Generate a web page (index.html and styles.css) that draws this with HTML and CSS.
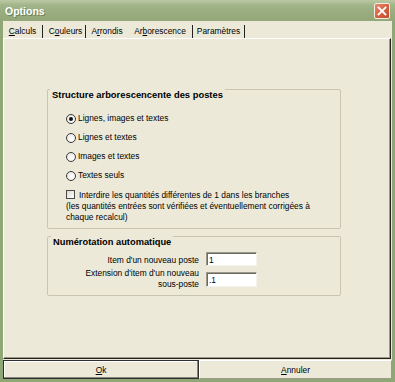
FILE: index.html
```html
<!DOCTYPE html>
<html lang="fr">
<head>
  <meta charset="UTF-8" />
  <title>Options</title>
  <link rel="stylesheet" href="styles.css">
</head>
<body>

  <div class="window">
    <!-- Title bar -->
    <div class="titlebar">
      <span class="title">Options</span>
      <button class="close-btn">
        <svg width="10" height="10" viewBox="0 0 10 10">
          <path d="M1.5 1.5 L8.5 8.5 M8.5 1.5 L1.5 8.5" stroke="#fff" stroke-width="1.8" stroke-linecap="square" />
        </svg>
      </button>
    </div>

    <div class="client">
      <!-- Tabs -->
      <div class="tabs">
        <div class="tab t1"><u>C</u>alculs</div>
        <div class="tab t2">C<u>o</u>uleurs</div>
        <div class="tab t3 no-sep">A<u>r</u>rondis</div>
        <div class="tab t4 active">Ar<u>b</u>orescence</div>
        <div class="tab t5">Paramètres</div>
      </div>

      <!-- Tab page -->
      <div class="panel">
        <div class="group structure">
          <div class="group-title">Structure arborescencente des postes</div>
          <div class="options">
            <div class="radio-row"><span class="radio checked"></span>Lignes, images et textes</div>
            <div class="radio-row"><span class="radio"></span>Lignes et textes</div>
            <div class="radio-row"><span class="radio"></span>Images et textes</div>
            <div class="radio-row"><span class="radio"></span>Textes seuls</div>
          </div>
          <div class="check-block">
            <span class="checkbox"></span>Interdire les quantités différentes de 1 dans les branches<br>
            (les quantités entrées sont vérifiées et éventuellement corrigées à<br>
            chaque recalcul)
          </div>
        </div>

        <div class="group numbering">
          <div class="group-title">Numérotation automatique</div>
          <div class="num-grid">
            <div class="lbl first">Item d'un nouveau poste</div>
            <div class="field short">1</div>
            <div class="lbl">Extension d'item d'un nouveau<br>sous-poste</div>
            <div class="field">.1</div>
          </div>
        </div>
      </div>

      <!-- Dialog buttons -->
      <div class="buttons">
        <button class="btn default"><u>O</u>k</button>
        <button class="btn"><u>A</u>nnuler</button>
      </div>
    </div>
  </div>

</body>
</html>
```

FILE: styles.css
```css
body {
  margin: 0;
  font-family: "Liberation Sans", Tahoma, Arial, sans-serif;
  font-size: 8.4px;
  color: #000;
  background: #ece9d8;
}

.window {
  width: 395px;
  height: 382px;
  display: flex;
  flex-direction: column;
  background: #8fa677;
}

/* Title bar */
.titlebar {
  height: 21px;
  display: flex;
  align-items: center;
  justify-content: space-between;
  padding: 0 5px 0 5px;
  background: linear-gradient(#bccaa4, #a2b489 25%, #98ac7e 60%, #93a779);
}

.title {
  color: #fff;
  font-weight: bold;
  font-size: 10.5px;
  text-shadow: 1px 1px 0 #6f8458;
}

.close-btn {
  width: 16px;
  height: 16px;
  padding: 0;
  border: 1px solid #f3eee2;
  border-radius: 2px;
  background: linear-gradient(135deg, #e98a6c, #d2603f 55%, #c34a2c);
  display: flex;
  align-items: center;
  justify-content: center;
}

.client {
  flex: 1;
  display: flex;
  flex-direction: column;
  margin: 0 3px 3px;
  background: #ece9d8;
}

/* Tabs */
.tabs {
  height: 17px;
  display: flex;
}

.tab {
  box-sizing: border-box;
  height: 13px;
  margin-top: 4px;
  line-height: 13px;
  text-align: center;
  border-right: 1px solid #222;
}

.tab.no-sep {
  border-right: none;
}

.t1 { width: 40px; }
.t2 { width: 43px; padding-left: 3px; }
.t3 { width: 42px; }
.t4 { width: 65px; }
.t5 { width: 52px; }

/* Tab page */
.panel {
  flex: 1;
  margin-right: 1px;
  border-top: 1px solid #fff;
  border-left: 1px solid #fff;
  border-right: 1px solid #222;
  border-bottom: 1px solid #222;
  box-shadow: inset -1px -1px 0 #9d9a87;
}

.group {
  margin-left: 43px;
  width: 294px;
  box-sizing: border-box;
  border: 1px solid #c9c5b1;
  border-radius: 2px;
  line-height: 11px;
}

.group-title {
  width: fit-content;
  margin-top: -1px;
  padding: 0 2px;
  line-height: 12px;
  font-size: 9.4px;
  font-weight: bold;
  background: #ece9d8;
}

.structure {
  margin-top: 50px;
  padding: 0 0 5px 18px;
}

.structure .group-title {
  margin-left: -16px;
}

.options {
  margin-top: 8px;
}

.radio-row {
  height: 19px;
  display: flex;
  align-items: center;
}

.radio {
  width: 10px;
  height: 10px;
  box-sizing: border-box;
  margin-right: 2px;
  border: 1px solid #3a3a3a;
  border-radius: 50%;
  background: radial-gradient(circle at 60% 60%, #fff, #e4e2d8);
  display: flex;
  align-items: center;
  justify-content: center;
}

.radio.checked::after {
  content: "";
  width: 4px;
  height: 4px;
  border-radius: 50%;
  background: #111;
}

.check-block {
  margin-top: 5px;
}

.checkbox {
  display: inline-block;
  width: 9px;
  height: 9px;
  box-sizing: border-box;
  margin-right: 4px;
  vertical-align: -1px;
  border: 1px solid #4a4a4a;
  background: linear-gradient(135deg, #dcd9cc, #fff);
}

.numbering {
  margin-top: 7px;
  padding-bottom: 5px;
}

.numbering .group-title {
  margin-left: 3px;
  font-size: 9.3px;
}

.num-grid {
  margin-top: 4px;
  display: grid;
  grid-template-columns: 151px 51px;
  column-gap: 7px;
  row-gap: 2px;
  align-items: center;
}

.lbl {
  text-align: right;
}

.lbl.first {
  align-self: end;
}

.field {
  box-sizing: border-box;
  height: 15px;
  padding-left: 2px;
  line-height: 15px;
  background: #fff;
  border-top: 1px solid #9c9a8c;
  border-left: 1px solid #9c9a8c;
  border-right: 1px solid #f4f3ee;
  border-bottom: 1px solid #f4f3ee;
  box-shadow: inset 1px 1px 0 #6b6a60;
}

.field.short {
  height: 14px;
  line-height: 14px;
}

/* Dialog buttons */
.buttons {
  display: flex;
  margin-top: 1px;
  height: 19px;
}

.btn {
  font-family: inherit;
  font-size: inherit;
  color: #000;
  background: #ece9d8;
  padding: 0;
  height: 19px;
  border: 1px solid;
  border-color: #fff #9d9a87 #9d9a87 #fff;
}

.btn.default {
  width: 196px;
  border: 1px solid #2e2e2e;
  box-shadow: inset -1px -1px 0 #8a877a, inset 1px 1px 0 #fff;
}

.btn:not(.default) {
  flex: 1;
}
```
